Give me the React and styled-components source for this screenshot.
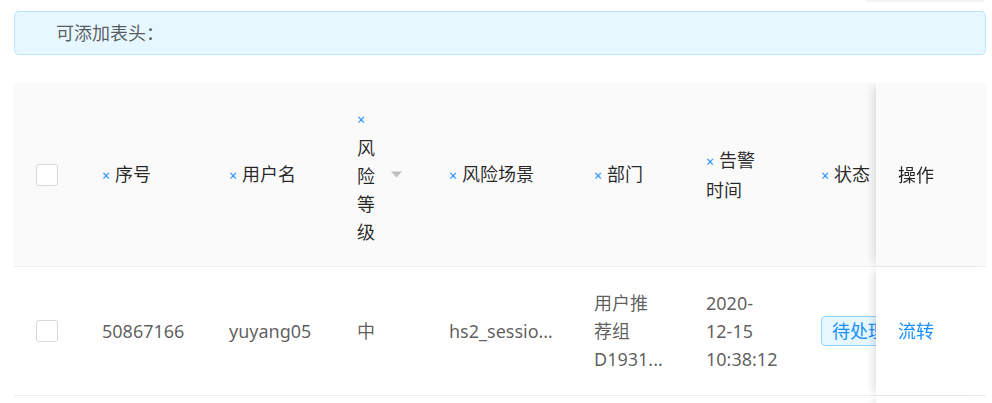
import React from "react";
import styled, { createGlobalStyle } from "styled-components";

const GlobalStyle = createGlobalStyle`
  body {
    margin: 0;
    background: #fff;
    font-family: "Noto Sans", "Noto Sans CJK SC", sans-serif;
    font-size: 18px;
    line-height: 28px;
    color: rgba(0, 0, 0, 0.65);
  }
`;

const Page = styled.div`
  padding: 0 6px 0 14px;
`;

const TopBar = styled.div`
  display: flex;
  justify-content: flex-end;
  height: 2px;
`;

const TopShade = styled.div`
  width: 119px;
  margin-right: 1px;
  background: #f3f3f3;
  border-radius: 0 0 4px 4px;
`;

const Alert = styled.div`
  margin-top: 9px;
  height: 44px;
  box-sizing: border-box;
  display: flex;
  align-items: center;
  padding-left: 41px;
  background: #e6f7ff;
  border: 1px solid #bae7ff;
  border-radius: 5px;
  color: rgba(0, 0, 0, 0.65);
`;

const TableWrap = styled.div`
  margin-top: 28px;
  overflow: hidden;
`;

const Table = styled.table`
  width: 1015px;
  table-layout: fixed;
  border-collapse: separate;
  border-spacing: 0;
`;

const fixedRight = `
  position: sticky;
  right: 0;
  z-index: 2;
  box-shadow: -7px 0 8px -4px rgba(0, 0, 0, 0.12);
`;

const Th = styled.th`
  padding: 20.5px 22px;
  background: #fafafa;
  border-bottom: 1px solid #ececec;
  color: rgba(0, 0, 0, 0.85);
  font-weight: 400;
  text-align: left;
  vertical-align: middle;
  ${(p) => p.$fixed && fixedRight}
`;

const Td = styled.td`
  padding: 22px;
  background: #fff;
  border-bottom: 1px solid #ececec;
  vertical-align: middle;
  ${(p) =>
    p.$ellipsis &&
    `
    padding-right: 16px;
    white-space: nowrap;
    overflow: hidden;
    text-overflow: ellipsis;
  `}
  ${(p) => p.$fixed && fixedRight}
`;

const HeadInner = styled.div`
  display: flex;
  align-items: center;
  justify-content: space-between;
`;

const HeadTitle = styled.div`
  ${(p) => (p.$maxWidth ? `max-width: ${p.$maxWidth}px;` : "white-space: nowrap;")}
`;

const Cross = styled.span`
  font-size: 14px;
  color: #1890ff;
  margin-right: 5px;
`;

const Caret = styled.svg`
  width: 11px;
  height: 7px;
  margin-right: 3px;
  fill: #bfbfbf;
`;

const Checkbox = styled.span`
  display: block;
  width: 22px;
  height: 22px;
  box-sizing: border-box;
  border: 1px solid #d9d9d9;
  border-radius: 3px;
  background: #fff;
`;

const Clamp = styled.div`
  display: -webkit-box;
  -webkit-box-orient: vertical;
  -webkit-line-clamp: 3;
  overflow: hidden;
  margin-right: -2px;
`;

const Tag = styled.span`
  display: inline-block;
  height: 30px;
  line-height: 28px;
  box-sizing: border-box;
  padding: 0 10px;
  white-space: nowrap;
  color: #1890ff;
  background: #e6f7ff;
  border: 1px solid #91d5ff;
  border-radius: 4px;
`;

const Link = styled.a`
  color: #1890ff;
  text-decoration: none;
  cursor: pointer;
`;

const columns = [
  { key: "check", width: 66 },
  { key: "id", title: "序号", width: 127, removable: true },
  { key: "user", title: "用户名", width: 128, removable: true },
  { key: "level", title: "风险等级", width: 92, removable: true, sortable: true, maxWidth: 20 },
  { key: "scene", title: "风险场景", width: 145, removable: true, ellipsis: true },
  { key: "dept", title: "部门", width: 112, removable: true },
  { key: "time", title: "告警时间", width: 115, removable: true, maxWidth: 56 },
  { key: "status", title: "状态", width: 120, removable: true },
  { key: "action", title: "操作", width: 110, fixed: true },
];

const rows = [
  {
    id: "50867166",
    user: "yuyang05",
    level: "中",
    scene: "hs2_session_login",
    dept: "用户推荐组D1931...",
    time: "2020-12-15 10:38:12",
    status: "待处理",
  },
  {
    id: "50867165",
    user: "liming02",
    level: "高",
    scene: "hs2_session_query",
    dept: "数据平台组",
    time: "2020-12-15 10:21:47",
    status: "待处理",
  },
];

function renderCell(col, row) {
  switch (col.key) {
    case "check":
      return <Checkbox />;
    case "dept":
      return <Clamp>{row.dept}</Clamp>;
    case "status":
      return <Tag>{row.status}</Tag>;
    case "action":
      return <Link>流转</Link>;
    default:
      return row[col.key];
  }
}

export default function App() {
  return (
    <>
      <GlobalStyle />
      <Page>
        <TopBar>
          <TopShade />
        </TopBar>
        <Alert>可添加表头：</Alert>
        <TableWrap>
          <Table>
            <colgroup>
              {columns.map((c) => (
                <col key={c.key} style={{ width: c.width }} />
              ))}
            </colgroup>
            <thead>
              <tr>
                {columns.map((c) => (
                  <Th key={c.key} $fixed={c.fixed}>
                    {c.key === "check" ? (
                      <Checkbox />
                    ) : (
                      <HeadInner>
                        <HeadTitle $maxWidth={c.maxWidth}>
                          {c.removable && <Cross>×</Cross>}
                          {c.title}
                        </HeadTitle>
                        {c.sortable && (
                          <Caret viewBox="0 0 11 7">
                            <path d="M0 0.5h11L5.5 6.5z" />
                          </Caret>
                        )}
                      </HeadInner>
                    )}
                  </Th>
                ))}
              </tr>
            </thead>
            <tbody>
              {rows.map((r) => (
                <tr key={r.id}>
                  {columns.map((c) => (
                    <Td key={c.key} $fixed={c.fixed} $ellipsis={c.ellipsis}>
                      {renderCell(c, r)}
                    </Td>
                  ))}
                </tr>
              ))}
            </tbody>
          </Table>
        </TableWrap>
      </Page>
    </>
  );
}
